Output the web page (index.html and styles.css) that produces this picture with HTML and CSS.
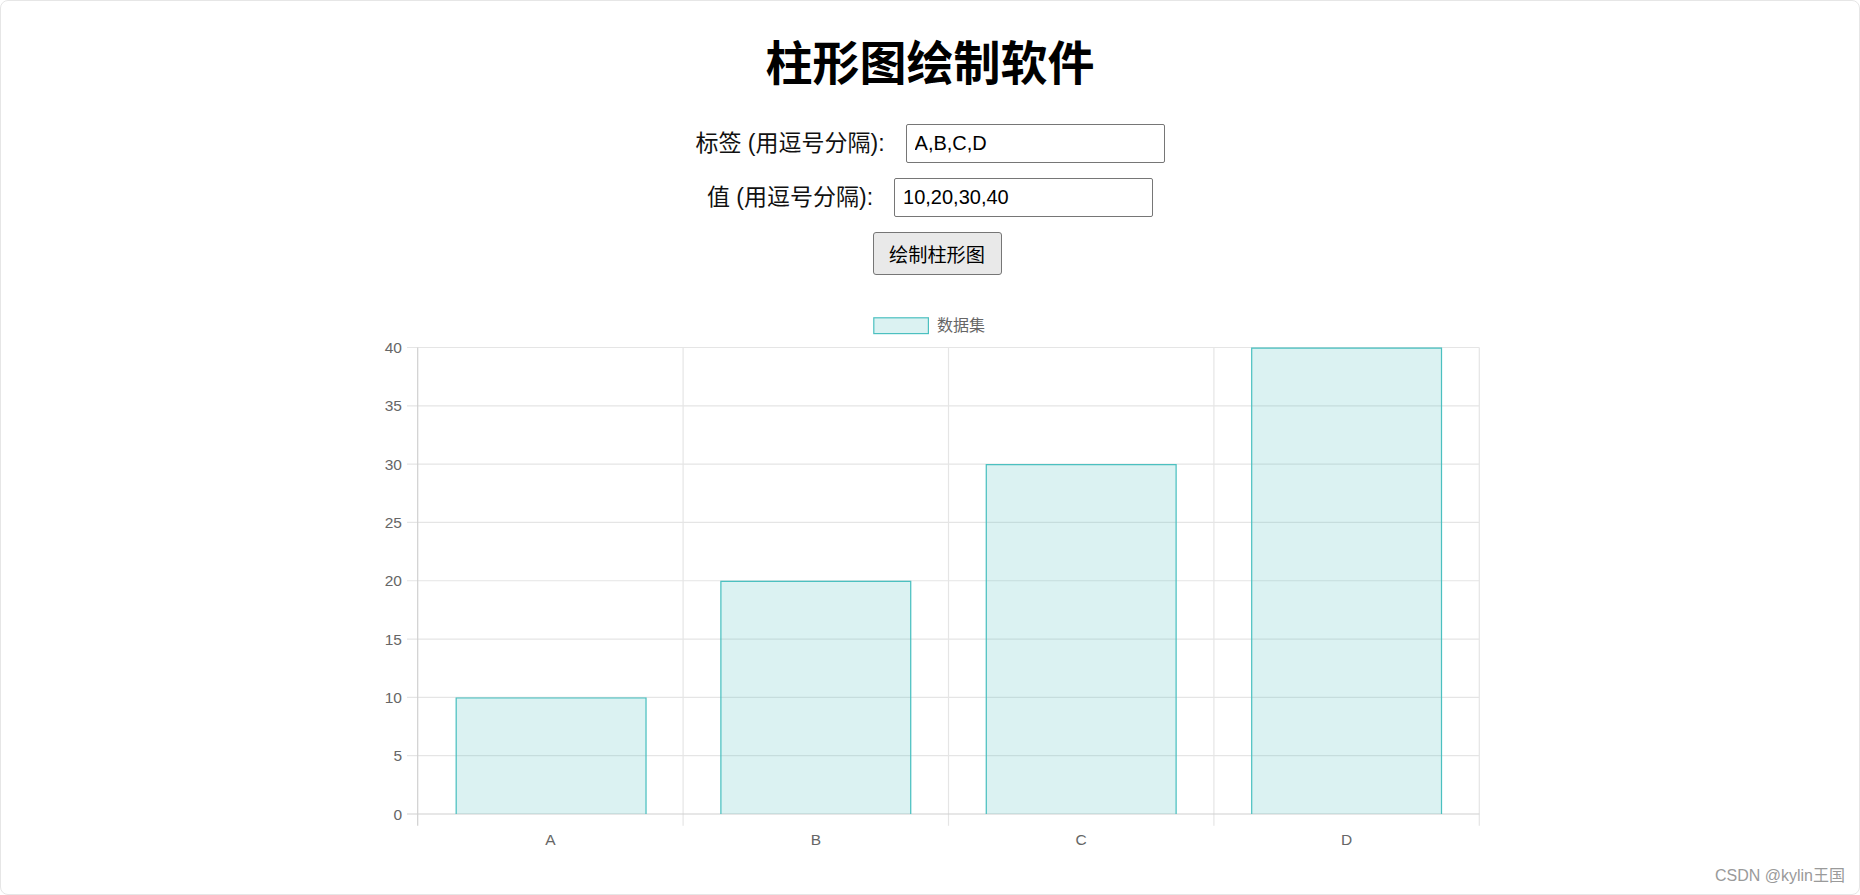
FILE: index.html
```html
<!DOCTYPE html>
<html lang="zh-CN">
<head>
<meta charset="utf-8">
<title>柱形图绘制软件</title>
<link rel="stylesheet" href="styles.css">
</head>
<body>
<div class="card">
  <h1 class="title">柱形图绘制软件</h1>
  <div class="form-row">
    <label for="labels">标签 (用逗号分隔):</label>
    <input id="labels" type="text" value="A,B,C,D">
  </div>
  <div class="form-row form-row-tight">
    <label for="values">值 (用逗号分隔):</label>
    <input id="values" type="text" value="10,20,30,40">
  </div>
  <div class="btn-row">
    <button type="button" class="draw-btn">绘制柱形图</button>
  </div>
  <svg class="chart" width="1858" height="560" viewBox="1 300 1858 560" xmlns="http://www.w3.org/2000/svg">
    <!-- legend -->
    <rect x="873.8" y="317.8" width="54.6" height="15.8" fill="rgba(75,192,192,0.2)" stroke="#4bc0c0" stroke-width="1.2"/>
    <text class="legend-text" x="937" y="331">数据集</text>

    <!-- horizontal grid -->
    <g stroke="#e5e5e5" stroke-width="1.2">
      <line x1="407" y1="347.5" x2="1479.3" y2="347.5"/>
      <line x1="407" y1="405.8" x2="1479.3" y2="405.8"/>
      <line x1="407" y1="464.1" x2="1479.3" y2="464.1"/>
      <line x1="407" y1="522.4" x2="1479.3" y2="522.4"/>
      <line x1="407" y1="580.75" x2="1479.3" y2="580.75"/>
      <line x1="407" y1="639.1" x2="1479.3" y2="639.1"/>
      <line x1="407" y1="697.4" x2="1479.3" y2="697.4"/>
      <line x1="407" y1="755.7" x2="1479.3" y2="755.7"/>
    </g>
    <!-- vertical grid -->
    <g stroke="#e5e5e5" stroke-width="1.2">
      <line x1="683.1" y1="347.5" x2="683.1" y2="825.7"/>
      <line x1="948.5" y1="347.5" x2="948.5" y2="825.7"/>
      <line x1="1213.9" y1="347.5" x2="1213.9" y2="825.7"/>
      <line x1="1479.3" y1="347.5" x2="1479.3" y2="825.7"/>
    </g>
    <!-- axes -->
    <g stroke="#d0d0d0" stroke-width="1.2">
      <line x1="407" y1="814" x2="1479.3" y2="814"/>
      <line x1="417.7" y1="347.5" x2="417.7" y2="825.7"/>
    </g>

    <!-- y labels -->
    <g class="tick-y">
      <text x="402" y="353">40</text>
      <text x="402" y="411.3">35</text>
      <text x="402" y="469.6">30</text>
      <text x="402" y="527.9">25</text>
      <text x="402" y="586.25">20</text>
      <text x="402" y="644.6">15</text>
      <text x="402" y="702.9">10</text>
      <text x="402" y="761.2">5</text>
      <text x="402" y="819.5">0</text>
    </g>

    <!-- bars -->
    <g fill="rgba(75,192,192,0.2)">
      <rect x="455.6" y="697.4" width="191" height="116.6"/>
      <rect x="720.3" y="580.75" width="191" height="233.25"/>
      <rect x="985.7" y="464.1" width="191" height="349.9"/>
      <rect x="1251.1" y="347.5" width="191" height="466.5"/>
    </g>
    <g fill="none" stroke="#4bc0c0" stroke-width="1.2">
      <path d="M456.2 814 V698 H646 V814"/>
      <path d="M720.9 814 V581.35 H910.7 V814"/>
      <path d="M986.3 814 V464.7 H1176.1 V814"/>
      <path d="M1251.7 814 V348.1 H1441.5 V814"/>
    </g>

    <!-- x labels -->
    <g class="tick-x">
      <text x="550.4" y="844.5">A</text>
      <text x="815.8" y="844.5">B</text>
      <text x="1081.2" y="844.5">C</text>
      <text x="1346.6" y="844.5">D</text>
    </g>
  </svg>
  <div class="watermark">CSDN @kylin王国</div>
</div>
</body>
</html>
```

FILE: styles.css
```css
html, body {
  margin: 0;
  padding: 0;
  background: #ffffff;
}

.card {
  box-sizing: border-box;
  position: relative;
  width: 1860px;
  height: 895px;
  border: 1px solid #e6e6e6;
  border-radius: 8px;
  overflow: hidden;
  background: #ffffff;
  font-family: "Liberation Sans", "Noto Sans CJK SC", sans-serif;
  color: #000;
}

.title {
  margin: 36px 0 0;
  font-family: "Noto Sans CJK SC", sans-serif;
  font-size: 47px;
  line-height: 46px;
  font-weight: 700;
  text-align: center;
  color: #000;
}

.form-row {
  display: flex;
  justify-content: center;
  align-items: center;
  gap: 21px;
  height: 39px;
  margin-top: 41px;
}

.form-row-tight {
  margin-top: 15px;
}

.form-row label {
  font-family: "Liberation Sans", "Noto Sans CJK SC", sans-serif;
  font-size: 23px;
  line-height: 39px;
  color: #111;
}

.form-row input {
  box-sizing: border-box;
  width: 259px;
  height: 39px;
  margin: 0;
  padding: 0 8px;
  border: 1px solid #767676;
  border-radius: 2px;
  background: #fff;
  font-family: "Liberation Sans", sans-serif;
  font-size: 20px;
  color: #000;
}

.btn-row {
  display: flex;
  justify-content: center;
  margin-top: 15px;
}

.draw-btn {
  box-sizing: border-box;
  width: 129px;
  height: 43px;
  margin: 0 0 0 14px;
  padding: 0;
  border: 1px solid #767676;
  border-radius: 3px;
  background: #e9e9e9;
  font-family: "Noto Sans CJK SC", sans-serif;
  font-size: 19.2px;
  color: #000;
}

.chart {
  display: block;
  margin-top: 25px;
}

.legend-text {
  font-family: "Liberation Sans", "Noto Sans CJK SC", sans-serif;
  font-size: 16px;
  fill: #666;
}

.tick-y text {
  font-family: "Liberation Sans", sans-serif;
  font-size: 15.5px;
  fill: #666;
  text-anchor: end;
}

.tick-x text {
  font-family: "Liberation Sans", sans-serif;
  font-size: 15.5px;
  fill: #666;
  text-anchor: middle;
}

.watermark {
  position: absolute;
  right: 14px;
  bottom: 9px;
  font-family: "Liberation Sans", "Noto Sans CJK SC", sans-serif;
  font-size: 16px;
  line-height: 18px;
  color: #9a9a9a;
}
```
